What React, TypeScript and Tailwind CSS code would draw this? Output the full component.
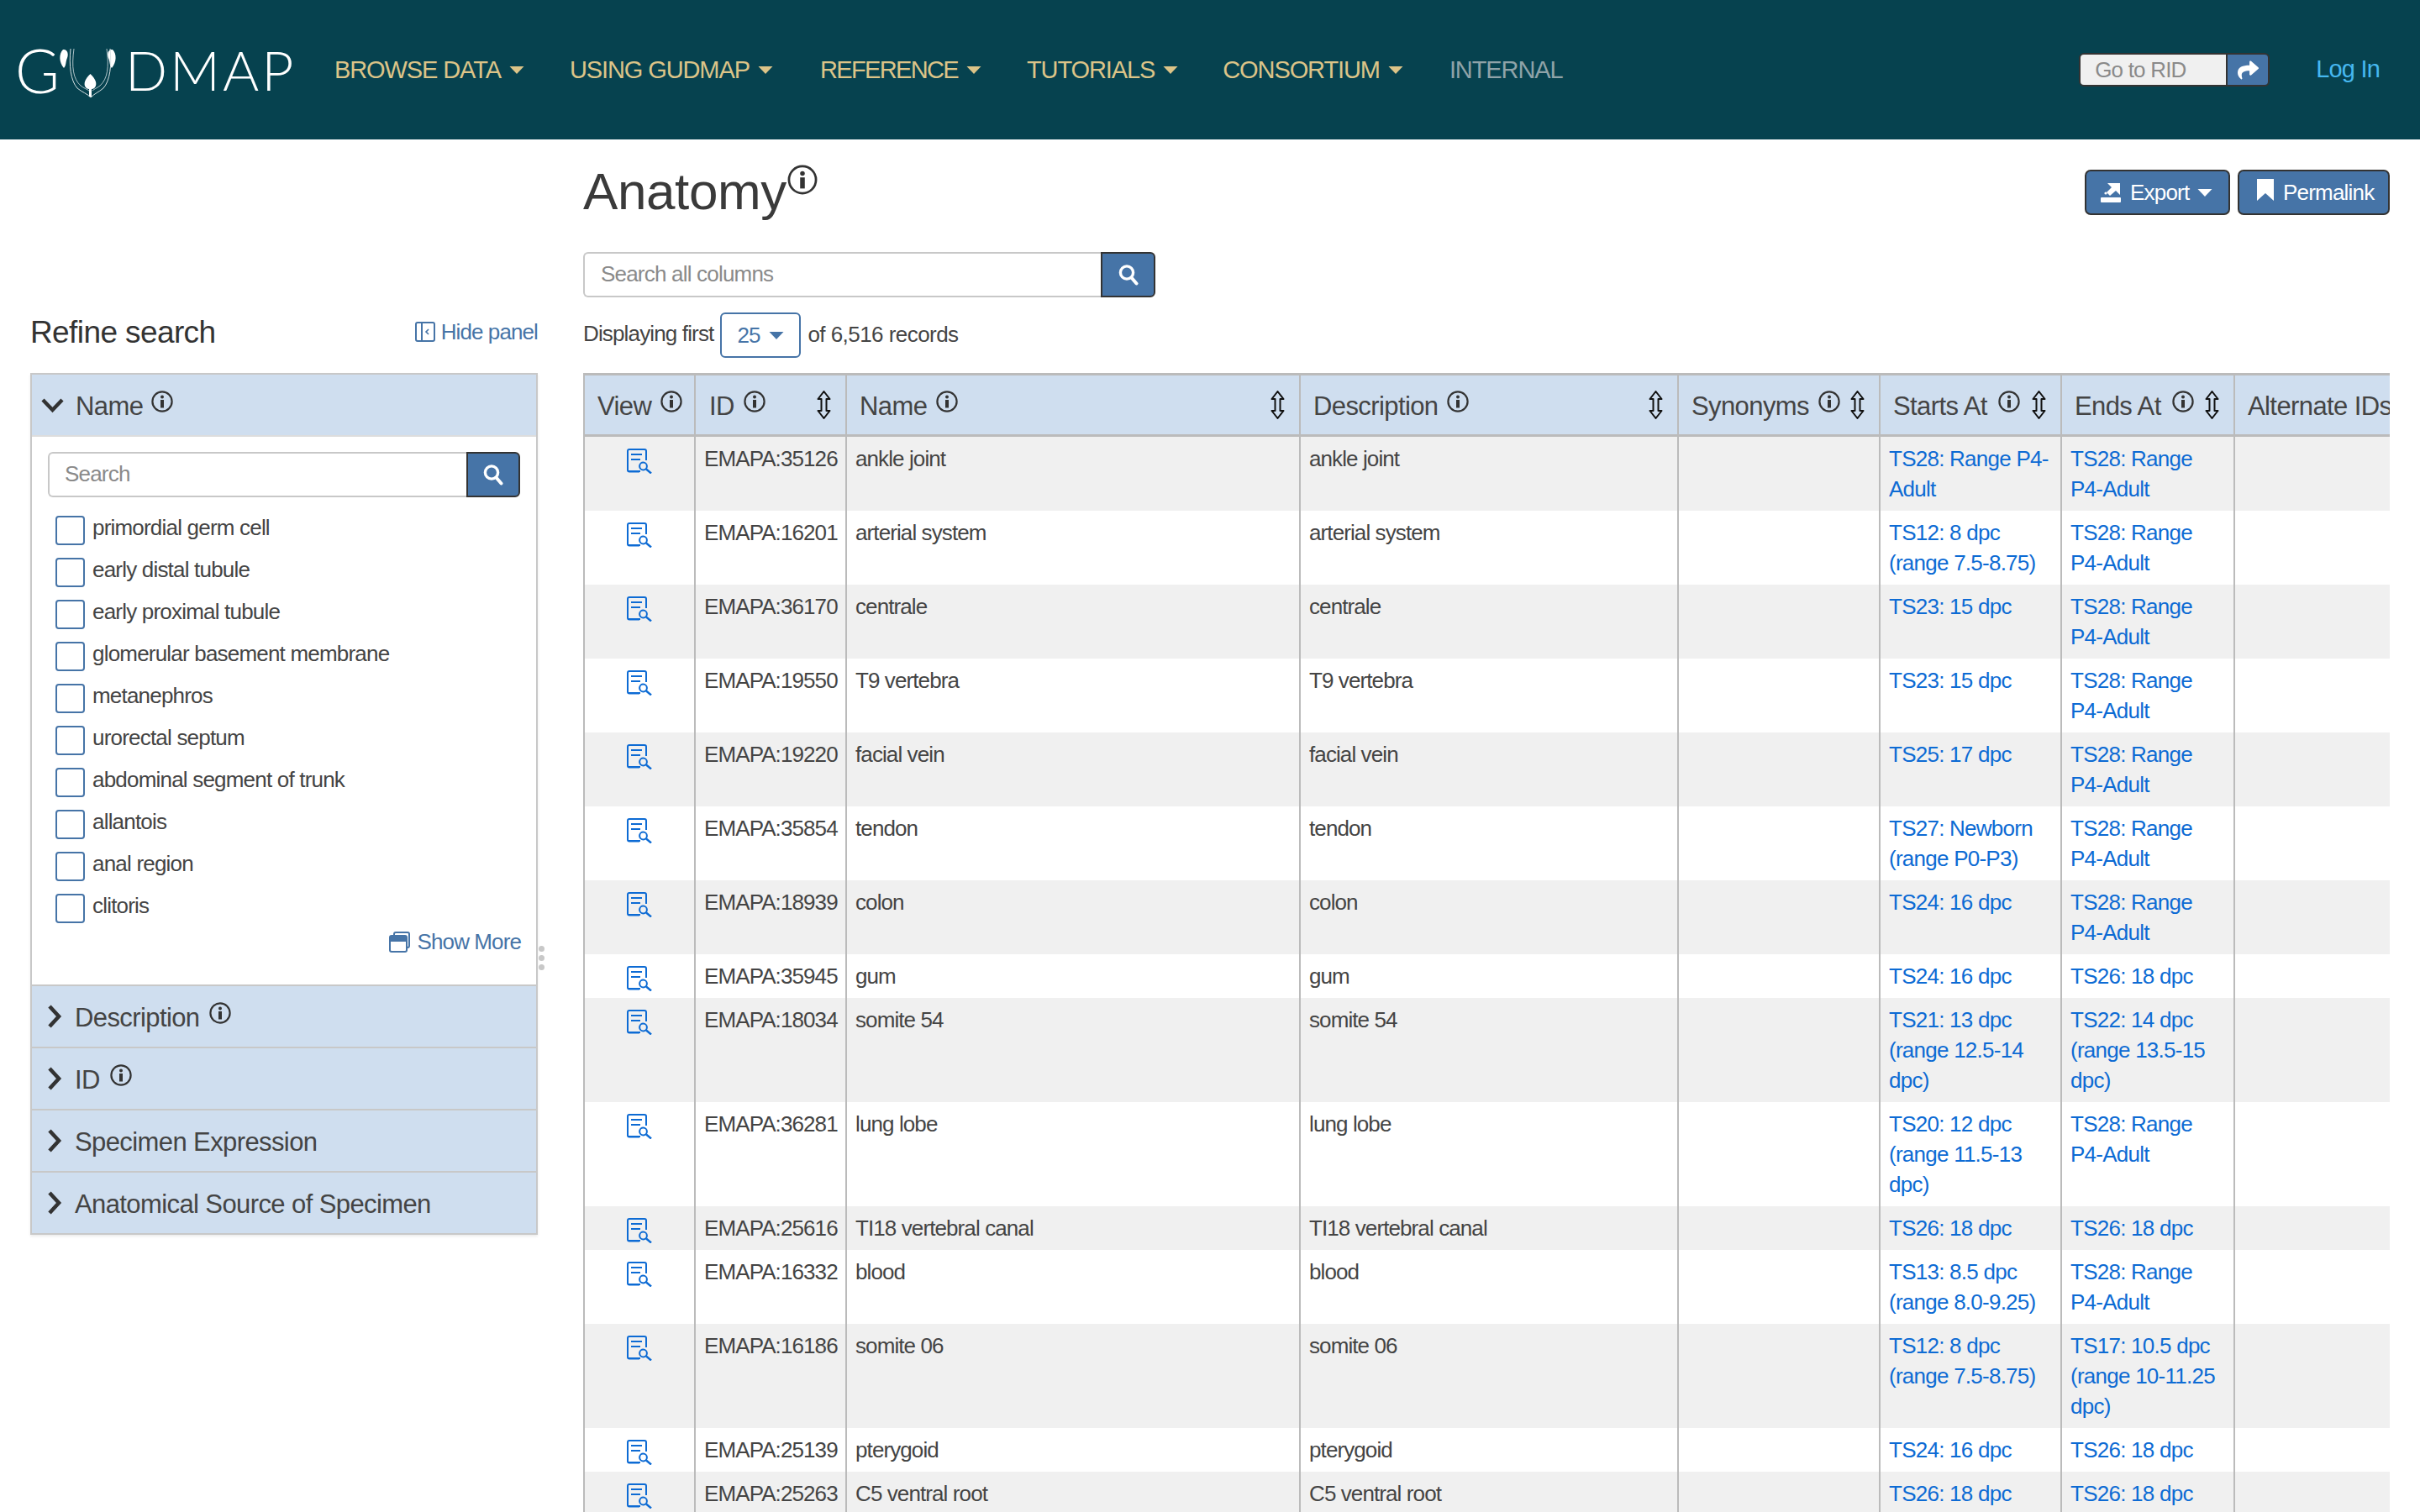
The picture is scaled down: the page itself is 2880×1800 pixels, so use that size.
import React from "react";
import { FaShare } from "react-icons/fa";

const T28 = "TS28: Range\nP4-Adult";
const rows: [string, string, string, string][] = [
  ["35126", "ankle joint", "TS28: Range P4-\nAdult", T28],
  ["16201", "arterial system", "TS12: 8 dpc\n(range 7.5-8.75)", T28],
  ["36170", "centrale", "TS23: 15 dpc", T28],
  ["19550", "T9 vertebra", "TS23: 15 dpc", T28],
  ["19220", "facial vein", "TS25: 17 dpc", T28],
  ["35854", "tendon", "TS27: Newborn\n(range P0-P3)", T28],
  ["18939", "colon", "TS24: 16 dpc", T28],
  ["35945", "gum", "TS24: 16 dpc", "TS26: 18 dpc"],
  ["18034", "somite 54", "TS21: 13 dpc\n(range 12.5-14\ndpc)", "TS22: 14 dpc\n(range 13.5-15\ndpc)"],
  ["36281", "lung lobe", "TS20: 12 dpc\n(range 11.5-13\ndpc)", T28],
  ["25616", "TI18 vertebral canal", "TS26: 18 dpc", "TS26: 18 dpc"],
  ["16332", "blood", "TS13: 8.5 dpc\n(range 8.0-9.25)", T28],
  ["16186", "somite 06", "TS12: 8 dpc\n(range 7.5-8.75)", "TS17: 10.5 dpc\n(range 10-11.25\ndpc)"],
  ["25139", "pterygoid", "TS24: 16 dpc", "TS26: 18 dpc"],
  ["25263", "C5 ventral root", "TS26: 18 dpc", "TS26: 18 dpc"],
];

const facets = [
  "primordial germ cell",
  "early distal tubule",
  "early proximal tubule",
  "glomerular basement membrane",
  "metanephros",
  "urorectal septum",
  "abdominal segment of trunk",
  "allantois",
  "anal region",
  "clitoris",
];

function Info({ size = 26, className = "" }: { size?: number; className?: string }) {
  return (
    <svg width={size} height={size} viewBox="0 0 26 26" className={className}>
      <circle cx="13" cy="13" r="11.6" fill="none" stroke="#333" strokeWidth="2.2" />
      <circle cx="13" cy="7.6" r="2" fill="#333" />
      <rect x="11" y="11" width="4" height="9.5" fill="#333" />
    </svg>
  );
}

function Sort() {
  return (
    <svg width="17" height="34" viewBox="0 0 17 34" className="shrink-0">
      <path
        d="M8.5 1 L15.5 10 L11.5 10 L11.5 24 L15.5 24 L8.5 33 L1.5 24 L5.5 24 L5.5 10 L1.5 10 Z"
        fill="none"
        stroke="#111"
        strokeWidth="2"
        strokeLinejoin="round"
      />
    </svg>
  );
}

function Magnifier() {
  return (
    <svg width="24" height="26" viewBox="0 0 24 26">
      <circle cx="10" cy="10.5" r="7.6" fill="none" stroke="#fff" strokeWidth="3.4" />
      <line x1="15.5" y1="16.5" x2="21.5" y2="23.5" stroke="#fff" strokeWidth="4" strokeLinecap="round" />
    </svg>
  );
}

function ViewIcon() {
  return (
    <svg width="30" height="30" viewBox="0 0 30 30" className="mx-auto block mt-[6px]">
      <path
        d="M15 27.5 H3 a2 2 0 0 1 -2 -2 V3 a2 2 0 0 1 2 -2 H21 a2 2 0 0 1 2 2 V14"
        fill="none"
        stroke="#0d6bd4"
        strokeWidth="2"
      />
      <line x1="1" y1="27" x2="16" y2="27" stroke="#0d6bd4" strokeWidth="2" />
      <line x1="5" y1="7" x2="18" y2="7" stroke="#0d6bd4" strokeWidth="2" />
      <line x1="5" y1="13" x2="16" y2="13" stroke="#0d6bd4" strokeWidth="2" />
      <circle cx="19.5" cy="21" r="4.4" fill="none" stroke="#0d6bd4" strokeWidth="2" />
      <line x1="23" y1="24.5" x2="29" y2="29.5" stroke="#0d6bd4" strokeWidth="2.4" />
    </svg>
  );
}

function Caret({ color, w = 18, h = 9 }: { color: string; w?: number; h?: number }) {
  return (
    <svg width={w} height={h} viewBox="0 0 17 9" className="shrink-0">
      <path d="M0 0 H17 L8.5 9 Z" fill={color} />
    </svg>
  );
}

function Logo() {
  return (
    <div className="flex items-center h-[66px] text-white font-['Lato',sans-serif] font-light text-[66px] leading-none w-[325px]">
      <span className="text-[72px] -ml-[1px]">G</span>
      <svg width="78" height="62" viewBox="0 0 78 62" className="shrink-0 -ml-[1px] mr-[1px] mt-[8px]">
        <path d="M5 3 C0 8 0 18 6 25 C9 22 8 17 10 13 C12 8 10 2 5 3 Z" fill="#fff" />
        <path d="M64 3 C69 8 69 18 63 25 C60 22 61 17 59 13 C57 8 59 2 64 3 Z" fill="#fff" />
        <path d="M14 2 C12 22 14 40 22 49 C28 54 33 55 38 60" fill="none" stroke="#d8e2e4" strokeWidth="1" />
        <path d="M18 2 C15 24 17 38 26 46 C30 49 33 50 36 52" fill="none" stroke="#d8e2e4" strokeWidth="0.8" />
        <path d="M61 2 C63 22 61 40 53 49 C47 54 43 55 38 60" fill="none" stroke="#d8e2e4" strokeWidth="1" />
        <path d="M57 2 C60 24 58 38 49 46 C45 49 42 50 40 52" fill="none" stroke="#d8e2e4" strokeWidth="0.8" />
        <path d="M37.5 32 C31 38 29 44 32 48 C34 51 41 51 43 48 C46 44 44 38 37.5 32 Z" fill="#fff" />
        <rect x="36" y="49" width="3" height="10" fill="#fff" />
      </svg>
      <span className="tracking-[3px]">DMAP</span>
    </div>
  );
}

function NavItem({ label, mr, track = "tracking-[-1.1px]" }: { label: string; mr: string; track?: string }) {
  return (
    <div className={`flex items-center gap-[10px] text-[29px] leading-none text-[#dcc488] ${mr}`}>
      <span className={track}>{label}</span>
      <Caret color="#dcc488" />
    </div>
  );
}

function Panel({ label, info }: { label: string; info?: boolean }) {
  return (
    <div className="h-[74px] bg-[#cfdeef] border-b-2 border-[#c8c8c8] flex items-center">
      <svg width="18" height="28" viewBox="0 0 18 28" className="ml-[18px] mr-[15px] shrink-0">
        <polyline points="3,2 14,14 3,26" fill="none" stroke="#333" strokeWidth="4.6" />
      </svg>
      <span className="text-[31px] tracking-[-0.6px] text-[#444] leading-none mt-[2px]">{label}</span>
      {info && <Info className="ml-[12px] -mt-[9px]" />}
    </div>
  );
}

const thBase = "bg-[#cfdeef] border-t-[3px] border-b-[3px] border-r-2 border-[#bbbbbb] h-[76px] p-0 font-normal text-left align-middle";
const tdBase = "border-r-2 border-[#bbbbbb] align-top px-[10px] py-[8px] text-[26px] leading-[36px] whitespace-pre-line";

function Th({ label, pl, sort, infoMl = "ml-[11px]" }: { label: string; pl: string; sort?: boolean; infoMl?: string }) {
  return (
    <th className={thBase}>
      <div className={`flex items-center justify-between pr-[17px] ${pl}`}>
        <span className="flex items-center whitespace-nowrap text-[31px] leading-none tracking-[-0.6px] text-[#444]">
          <span className="mt-[2px]">{label}</span>
          <Info className={`${infoMl} -mt-[9px] shrink-0`} />
        </span>
        {sort && <Sort />}
      </div>
    </th>
  );
}

export default function App() {
  return (
    <div className="w-[2880px] h-[1800px] overflow-hidden bg-white font-['Liberation_Sans',Arial,sans-serif] text-[#333]">
      <header className="h-[166px] bg-[#06424f] flex items-center pl-[19px] relative">
        <Logo />
        <nav className="flex items-center ml-[54px]">
          <NavItem label="BROWSE DATA" mr="mr-[54px]" />
          <NavItem label="USING GUDMAP" mr="mr-[56px]" />
          <NavItem label="REFERENCE" mr="mr-[54px]" track="tracking-[-1.65px]" />
          <NavItem label="TUTORIALS" mr="mr-[53px]" />
          <NavItem label="CONSORTIUM" mr="mr-[55px]" />
          <span className="text-[29px] leading-none tracking-[-1.1px] text-[#8fa3a8]">INTERNAL</span>
        </nav>
        <div className="ml-auto flex items-center mr-[48px]">
          <div className="w-[227px] h-[40px] rounded-[6px] border-2 border-[#333] flex overflow-hidden">
            <div className="flex-1 bg-[#f0f0f0] flex items-center pl-[17px] text-[26px] tracking-[-0.8px] text-[#8a8a8a] border-r-2 border-[#333]">
              Go to RID
            </div>
            <div className="w-[48px] bg-[#4674a7] flex items-center justify-center">
              <FaShare className="text-white text-[25px]" />
            </div>
          </div>
          <a className="ml-[55px] text-[29px] tracking-[-0.8px] text-[#46b8f0]">Log In</a>
        </div>
      </header>

      <div className="flex">
        <aside className="w-[604px] ml-[36px] pt-[208px] shrink-0 relative">
          <div className="flex items-center justify-between h-[42px] mb-[28px]">
            <span className="text-[37px] leading-none tracking-[-0.6px] text-[#333]">Refine search</span>
            <span className="flex items-center text-[26px] tracking-[-0.9px] text-[#4674a7]">
              <svg width="24" height="24" viewBox="0 0 24 24" className="mr-[7px]">
                <rect x="1" y="1" width="22" height="22" rx="2" fill="none" stroke="#4674a7" strokeWidth="2" />
                <line x1="8" y1="1" x2="8" y2="23" stroke="#4674a7" strokeWidth="2" />
                <polyline points="16,9 13,12 16,15" fill="none" stroke="#4674a7" strokeWidth="1.6" />
              </svg>
              Hide panel
            </span>
          </div>
          <div className="border-2 border-b-0 border-[#c8c8c8] shadow-[0_2px_3px_rgba(0,0,0,0.08)]">
            <div className="h-[74px] bg-[#cfdeef] border-b-2 border-[#dddddd] flex items-center">
              <svg width="30" height="20" viewBox="0 0 30 20" className="ml-[10px] mr-[12px] shrink-0">
                <polyline points="3,4 14.5,16 26,4" fill="none" stroke="#333" strokeWidth="4.4" />
              </svg>
              <span className="text-[31px] tracking-[-0.6px] text-[#444] leading-none mt-[2px]">Name</span>
              <Info className="ml-[10px] -mt-[9px]" />
            </div>
            <div className="h-[654px] pt-[18px] px-[19px] bg-white border-b-2 border-[#c8c8c8]">
              <div className="flex h-[54px]">
                <div className="flex-1 border-2 border-r-0 border-[#c8c8c8] rounded-l-[6px] flex items-center pl-[18px] pb-[2px] text-[26px] tracking-[-0.8px] text-[#8a8a8a]">
                  Search
                </div>
                <div className="w-[64px] bg-[#4674a7] border-2 border-[#333] rounded-r-[6px] flex items-center justify-center">
                  <Magnifier />
                </div>
              </div>
              <div className="mt-[22px] pl-[9px]">
                {facets.map((f) => (
                  <div key={f} className="h-[50px] flex items-start">
                    <div className="w-[35px] h-[35px] border-2 border-[#4674a7] rounded-[4px] shrink-0" />
                    <span className="ml-[9px] text-[26px] leading-[30px] -mt-[1px] tracking-[-0.8px] text-[#444]">{f}</span>
                  </div>
                ))}
              </div>
              <div className="flex justify-end items-center -mt-[8px] -mr-[1px]">
                <svg width="25" height="25" viewBox="0 0 25 25" className="mr-[9px]">
                  <path d="M6 4 V3 a2 2 0 0 1 2 -2 H22 a2 2 0 0 1 2 2 V17 a2 2 0 0 1 -2 2 H21" fill="none" stroke="#4674a7" strokeWidth="2" />
                  <rect x="1" y="5" width="20" height="19" rx="2" fill="none" stroke="#4674a7" strokeWidth="2" />
                  <rect x="1" y="5" width="20" height="7" fill="#4674a7" />
                </svg>
                <span className="text-[26px] leading-[30px] tracking-[-0.9px] text-[#4674a7]">Show More</span>
              </div>
            </div>
            <Panel label="Description" info />
            <Panel label="ID" info />
            <Panel label="Specimen Expression" />
            <Panel label="Anatomical Source of Specimen" />
          </div>
          <div className="absolute left-[605px] top-[960px] flex flex-col gap-[4px]">
            <span className="block w-[7px] h-[7px] rounded-full bg-[#c8c8c8]" />
            <span className="block w-[7px] h-[7px] rounded-full bg-[#c8c8c8]" />
            <span className="block w-[7px] h-[7px] rounded-full bg-[#c8c8c8]" />
          </div>
        </aside>

        <main className="ml-[54px] w-[2150px] shrink-0">
          <div className="flex justify-between h-[134px]">
            <h1 className="flex items-start text-[62px] leading-none font-normal tracking-[-0.4px] text-[#3a3a3a] pt-[31px]">
              Anatomy
              <svg width="36" height="36" viewBox="0 0 26 26" className="-mt-[1px] ml-[1px]">
                <circle cx="13" cy="13" r="11.6" fill="none" stroke="#333" strokeWidth="2" />
                <circle cx="13" cy="7.6" r="2" fill="#333" />
                <rect x="11" y="11" width="4" height="9.5" fill="#333" />
              </svg>
            </h1>
            <div className="flex gap-[9px] pt-[36px] items-start">
              <div className="w-[173px] h-[54px] bg-[#4674a7] border-2 border-[#333] rounded-[7px] flex items-center text-white text-[26px] tracking-[-0.8px] pl-[17px]">
                <svg width="24" height="26" viewBox="0 0 24 26" className="shrink-0 mr-[11px]">
                  <path d="M8 2 H23 V16 L18 11 L11 17 L7 13 L13 7 Z" fill="#fff" />
                  <rect x="0" y="19" width="24" height="6" rx="1" fill="#fff" />
                  <circle cx="6" cy="14" r="1.6" fill="#fff" />
                </svg>
                Export
                <span className="ml-[10px]"><Caret color="#fff" /></span>
              </div>
              <div className="w-[181px] h-[54px] bg-[#4674a7] border-2 border-[#333] rounded-[7px] flex items-center text-white text-[26px] tracking-[-0.8px] pl-[21px]">
                <svg width="20" height="26" viewBox="0 0 20 26" className="shrink-0 mr-[11px] -mt-[6px]">
                  <path d="M0 0 H20 V26 L10 17 L0 26 Z" fill="#fff" />
                </svg>
                Permalink
              </div>
            </div>
          </div>

          <div className="flex w-[681px] h-[54px]">
            <div className="flex-1 border-2 border-r-0 border-[#c8c8c8] rounded-l-[6px] flex items-center pl-[19px] pb-[2px] text-[26px] tracking-[-0.8px] text-[#8a8a8a]">
              Search all columns
            </div>
            <div className="w-[65px] bg-[#4674a7] border-2 border-[#333] rounded-r-[6px] flex items-center justify-center">
              <Magnifier />
            </div>
          </div>

          <div className="flex items-center mt-[18px] h-[54px] mb-[18px] text-[26px] text-[#444]">
            <span className="-mt-[3px] tracking-[-0.85px]">Displaying first</span>
            <div className="w-[96px] h-[54px] border-2 border-[#4674a7] rounded-[6px] ml-[8px] mr-[8px] flex items-center justify-center gap-[11px] text-[#4674a7] tracking-[-1px]">
              25
              <Caret color="#4674a7" />
            </div>
            <span className="-mt-[1px] tracking-[-0.55px]">of 6,516 records</span>
          </div>

          <div className="w-[2150px] overflow-hidden border-l-2 border-[#bbbbbb]">
            <table className="table-fixed border-separate border-spacing-0 w-[2364px]">
              <colgroup>
                <col className="w-[132px]" />
                <col className="w-[180px]" />
                <col className="w-[540px]" />
                <col className="w-[450px]" />
                <col className="w-[240px]" />
                <col className="w-[216px]" />
                <col className="w-[206px]" />
                <col className="w-[400px]" />
              </colgroup>
              <thead>
                <tr>
                  <Th label="View" pl="pl-[15px]" />
                  <Th label="ID" pl="pl-[16px]" sort />
                  <Th label="Name" pl="pl-[15px]" sort />
                  <Th label="Description" pl="pl-[15px]" sort />
                  <Th label="Synonyms" pl="pl-[15px]" sort />
                  <Th label="Starts At" pl="pl-[15px]" sort infoMl="ml-[13px]" />
                  <Th label="Ends At" pl="pl-[15px]" sort infoMl="ml-[13px]" />
                  <th className={thBase}>
                    <span className="block pl-[15px] mt-[2px] text-[31px] leading-none tracking-[-0.6px] text-[#444] whitespace-nowrap">Alternate IDs</span>
                  </th>
                </tr>
              </thead>
              <tbody>
                {rows.map((r, i) => (
                  <tr key={r[0]} className={i % 2 === 0 ? "bg-[#f0f0f0]" : "bg-white"}>
                    <td className={tdBase}><ViewIcon /></td>
                    <td className={`${tdBase} tracking-[-0.9px] text-[#444]`}>EMAPA:{r[0]}</td>
                    <td className={`${tdBase} tracking-[-0.9px] text-[#444]`}>{r[1]}</td>
                    <td className={`${tdBase} tracking-[-0.9px] text-[#444]`}>{r[1]}</td>
                    <td className={tdBase} />
                    <td className={`${tdBase} tracking-[-0.75px] text-[#0d6bd4]`}>{r[2]}</td>
                    <td className={`${tdBase} tracking-[-0.75px] text-[#0d6bd4]`}>{r[3]}</td>
                    <td className={tdBase} />
                  </tr>
                ))}
              </tbody>
            </table>
          </div>
        </main>
      </div>
    </div>
  );
}
